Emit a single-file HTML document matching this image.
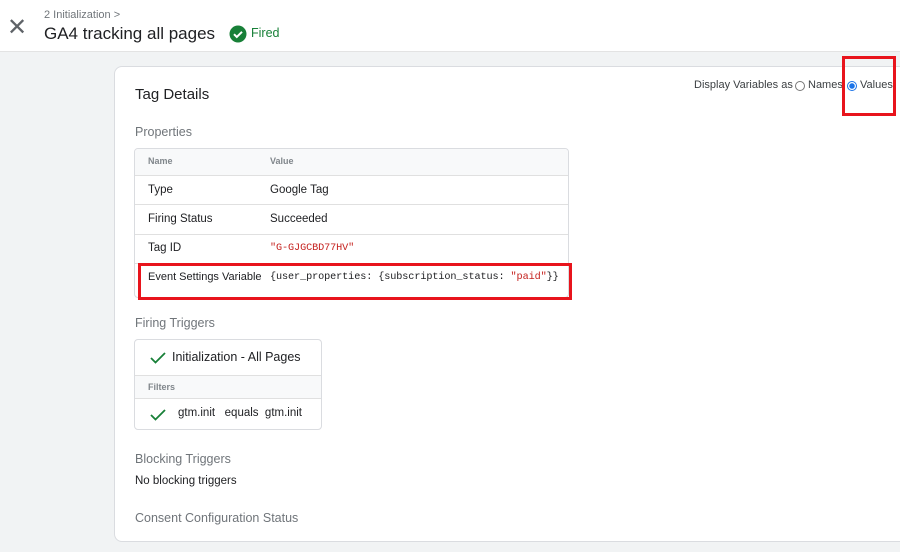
<!DOCTYPE html>
<html><head><style>
*{margin:0;padding:0;box-sizing:border-box}
body{width:900px;height:552px;overflow:hidden;background:#f1f3f4;font-family:"Liberation Sans",sans-serif;position:relative;color:#202124}
.a{position:absolute;white-space:nowrap}
.hdr{position:absolute;left:0;top:0;width:900px;height:52px;background:#fff;border-bottom:1px solid #e3e3e3}
.card{position:absolute;left:114px;top:66px;width:800px;height:476px;background:#fff;border:1px solid #dadce0;border-radius:8px}
.sec{color:#70757a;font-size:12.5px}
.tbl{position:absolute;left:134px;top:148px;width:435px;height:150px;border:1px solid #dadce0;border-radius:4px;overflow:hidden}
.row{position:absolute;left:0;width:100%;border-top:1px solid #e0e0e0;font-size:11.5px}
.mono{font-family:"Liberation Mono",monospace;font-size:10.2px;letter-spacing:-0.1px}
.red{color:#c5221f}
.rb{position:absolute;border:3px solid #e8141c}
</style></head><body>
<div class="hdr"></div>
<div class="a" style="left:7px;top:13px;font-size:24px;color:#5f6368;font-weight:300">✕</div>
<div class="a" style="left:44px;top:9px;font-size:11px;color:#70757a">2 Initialization &gt;</div>
<div class="a" style="left:44px;top:24px;font-size:17px;color:#202124">GA4 tracking all pages</div>
<svg class="a" style="left:229px;top:25px" width="18" height="18" viewBox="0 0 18 18"><circle cx="9" cy="9" r="8.5" fill="#188038"/><path d="M5 9.2l2.8 2.8L13 6.8" stroke="#fff" stroke-width="2" fill="none"/></svg>
<div class="a" style="left:251px;top:26px;font-size:12.5px;color:#188038">Fired</div>
<div class="card"></div>
<div class="a" style="left:135px;top:86px;font-size:15px">Tag Details</div>
<div class="a" style="left:694px;top:79px;font-size:11px;color:#3c4043">Display Variables as</div>
<div class="a" style="left:795px;top:81px;width:10px;height:10px;border:1px solid #777;border-radius:50%"></div>
<div class="a" style="left:808px;top:79px;font-size:11px;color:#3c4043">Names</div>
<div class="a" style="left:847px;top:81px;width:10px;height:10px;border:1px solid #1a73e8;border-radius:50%;background:radial-gradient(#1a73e8 2.5px,#fff 3px)"></div>
<div class="a" style="left:860px;top:79px;font-size:11px;color:#3c4043">Values</div>
<div class="rb" style="left:842px;top:56px;width:54px;height:60px"></div>
<div class="a sec" style="left:135px;top:125px">Properties</div>
<div class="tbl">
<div class="a" style="left:0;top:0;width:100%;height:26px;background:#f8f9fa"></div>
<div class="a" style="left:13px;top:7px;font-size:9px;color:#80868b;font-weight:bold">Name</div>
<div class="a" style="left:135px;top:7px;font-size:9px;color:#80868b;font-weight:bold">Value</div>
<div class="row" style="top:26px;height:30px"><span class="a" style="left:13px;top:8px">Type</span><span class="a" style="left:135px;top:8px">Google Tag</span></div>
<div class="row" style="top:55px;height:30px"><span class="a" style="left:13px;top:8px">Firing Status</span><span class="a" style="left:135px;top:8px">Succeeded</span></div>
<div class="row" style="top:85px;height:30px"><span class="a" style="left:13px;top:7px">Tag ID</span><span class="a mono red" style="left:135px;top:8px">"G-GJGCBD77HV"</span></div>
<div class="row" style="top:114px;height:36px"><span class="a" style="left:13px;top:7px;font-size:11px">Event Settings Variable</span><span class="a mono" style="left:135px;top:8px">{user_properties: {subscription_status: <span class="red">"paid"</span>}}</span></div>
</div>
<div class="rb" style="left:138px;top:263px;width:434px;height:37px"></div>
<div class="a sec" style="left:135px;top:316px">Firing Triggers</div>
<div class="a" style="left:134px;top:339px;width:188px;height:91px;border:1px solid #dadce0;border-radius:4px;overflow:hidden">
<div class="a" style="left:0;top:35px;width:100%;height:24px;background:#f8f9fa;border-top:1px solid #e0e0e0;border-bottom:1px solid #e0e0e0"></div>
<svg class="a" style="left:15px;top:12px" width="16" height="12"><path d="M1 6l4.5 4.5L15 1" stroke="#188038" stroke-width="1.8" fill="none"/></svg>
<div class="a" style="left:37px;top:10px;font-size:12.5px">Initialization - All Pages</div>
<div class="a" style="left:13px;top:42px;font-size:9px;color:#80868b;font-weight:bold">Filters</div>
<svg class="a" style="left:15px;top:69px" width="16" height="12"><path d="M1 6l4.5 4.5L15 1" stroke="#188038" stroke-width="1.8" fill="none"/></svg>
<div class="a" style="left:43px;top:67px;font-size:11.5px">gtm.init&nbsp;&nbsp; equals&nbsp; gtm.init</div>
</div>
<div class="a sec" style="left:135px;top:452px">Blocking Triggers</div>
<div class="a" style="left:135px;top:475px;font-size:11.5px">No blocking triggers</div>
<div class="a sec" style="left:135px;top:511px">Consent Configuration Status</div>
</body></html>
